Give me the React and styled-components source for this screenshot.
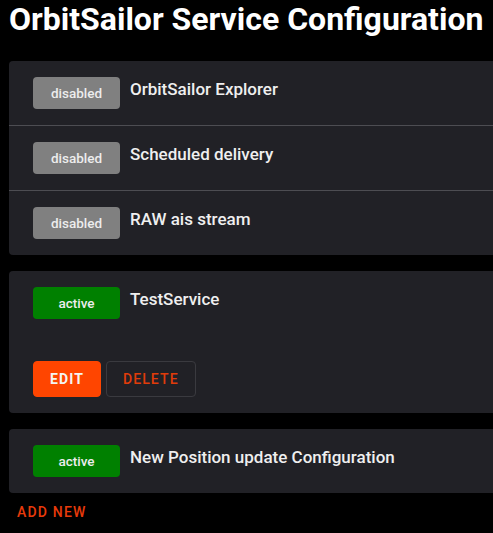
import React from "react";
import styled, { createGlobalStyle } from "styled-components";

const GlobalStyle = createGlobalStyle`
  html, body {
    margin: 0;
    padding: 0;
    background: #000000;
    overflow: hidden;
  }
  body {
    font-family: Roboto, "Liberation Sans", Arial, sans-serif;
    color: #e8e8e8;
  }
`;

const Page = styled.div`
  padding: 0 0 20px 9px;
`;

const Title = styled.h1`
  margin: 0;
  font-size: 32px;
  font-weight: 700;
  line-height: 38px;
  color: #ffffff;
  white-space: nowrap;
`;

const List = styled.div`
  display: flex;
  flex-direction: column;
  gap: 16px;
  margin-top: 23px;
`;

const Card = styled.div`
  background: #212126;
  border-radius: 4px 0 0 4px;
`;

const Row = styled.div`
  display: flex;
  flex-direction: column;
  padding: 16px 24px;
  & + & {
    border-top: 1px solid #4d4d52;
  }
`;

const RowHead = styled.div`
  display: flex;
  align-items: flex-start;
  gap: 10px;
`;

const Badge = styled.span`
  display: flex;
  align-items: center;
  justify-content: center;
  width: 87px;
  height: 32px;
  border-radius: 4px;
  background: ${(p) => (p.$active ? "#008000" : "#808080")};
  color: #ededed;
  font-size: 13.5px;
  font-weight: 500;
`;

const Name = styled.span`
  font-size: 17px;
  font-weight: 500;
  line-height: 24px;
  color: #efefef;
`;

const Actions = styled.div`
  display: flex;
  gap: 5px;
  margin-top: 42px;
`;

const Button = styled.button`
  height: 36px;
  padding: 0 16px;
  border-radius: 4px;
  font-family: inherit;
  font-size: 14px;
  letter-spacing: 1.1px;
  cursor: pointer;
  background: ${(p) => (p.$primary ? "#ff4500" : "transparent")};
  color: ${(p) => (p.$primary ? "#f4f4f4" : "#e03c0a")};
  border: 1px solid ${(p) => (p.$primary ? "#ff4500" : "#3a3a3f")};
  font-weight: ${(p) => (p.$primary ? 700 : 500)};
`;

const AddButton = styled.button`
  margin-top: 5px;
  padding: 6px 8px;
  background: transparent;
  border: none;
  font-family: inherit;
  font-size: 14px;
  line-height: 16px;
  font-weight: 500;
  letter-spacing: 1.2px;
  color: #e83a0a;
  cursor: pointer;
`;

const groups = [
  [
    { name: "OrbitSailor Explorer", active: false },
    { name: "Scheduled delivery", active: false },
    { name: "RAW ais stream", active: false },
  ],
  [{ name: "TestService", active: true, editable: true }],
  [{ name: "New Position update Configuration", active: true }],
];

export default function App() {
  return (
    <Page>
      <GlobalStyle />
      <Title>OrbitSailor Service Configuration</Title>
      <List>
        {groups.map((rows, i) => (
          <Card key={i}>
            {rows.map((r) => (
              <Row key={r.name}>
                <RowHead>
                  <Badge $active={r.active}>
                    {r.active ? "active" : "disabled"}
                  </Badge>
                  <Name>{r.name}</Name>
                </RowHead>
                {r.editable && (
                  <Actions>
                    <Button $primary>EDIT</Button>
                    <Button>DELETE</Button>
                  </Actions>
                )}
              </Row>
            ))}
          </Card>
        ))}
      </List>
      <AddButton>ADD NEW</AddButton>
    </Page>
  );
}
